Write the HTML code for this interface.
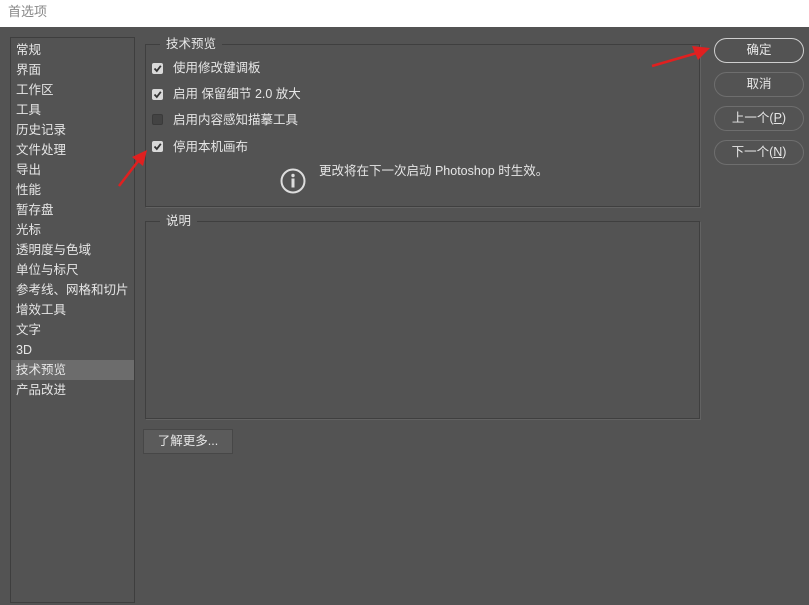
<!DOCTYPE html>
<html><head><meta charset="utf-8"><style>
body{margin:0;width:809px;height:605px;background:#535353;font-family:"Liberation Sans","Noto Sans CJK SC",sans-serif;font-size:12.5px;color:#e6e6e6;position:relative;overflow:hidden}
.t{position:absolute;left:0;top:0;width:809px;height:27px;background:#fff;color:#888;font-size:13px;line-height:24px;padding-left:8px;box-sizing:border-box}
.l{position:absolute;left:10px;top:37px;width:123px;height:564px;border:1px solid #3e3e3e;background:#535353}
.l div{height:20px;line-height:20px;padding-left:5px}
.l .s{background:#6c6c6c}
.g{position:absolute;border:1px solid #3f3f3f;box-shadow:1px 1px 0 #626262}
.gt{position:absolute;background:#535353;padding:0 6px;top:-9px;left:14px;line-height:16px}
.cb{position:absolute;left:152px;width:11px;height:11px;background:#d9d9d9;border-radius:2px}
.cb.e{background:#434343;border:1px solid #3a3a3a;width:9px;height:9px}
.cb svg{position:absolute;left:1px;top:1px}
.lb{position:absolute;left:173px;line-height:16px}
.b{position:absolute;left:714px;width:88px;height:23px;border:1px solid #6e6e6e;border-radius:13px;text-align:center;line-height:23px;color:#e6e6e6}
</style></head><body>
<div class="t">首选项</div>
<div class="l">
<div style="margin-top:2px">常规</div><div>界面</div><div>工作区</div><div>工具</div><div>历史记录</div><div>文件处理</div><div>导出</div><div>性能</div><div>暂存盘</div><div>光标</div><div>透明度与色域</div><div>单位与标尺</div><div>参考线、网格和切片</div><div>增效工具</div><div>文字</div><div>3D</div><div class="s">技术预览</div><div>产品改进</div>
</div>
<div class="g" style="left:145px;top:44px;width:553px;height:161px"><div class="gt">技术预览</div></div>
<div class="cb" style="top:63px"><svg width="9" height="9"><path d="M1.5 4.5L3.8 7L7.8 1.8" stroke="#333" stroke-width="1.8" fill="none"/></svg></div>
<div class="lb" style="top:60px">使用修改键调板</div>
<div class="cb" style="top:89px"><svg width="9" height="9"><path d="M1.5 4.5L3.8 7L7.8 1.8" stroke="#333" stroke-width="1.8" fill="none"/></svg></div>
<div class="lb" style="top:86px">启用 保留细节 2.0 放大</div>
<div class="cb e" style="top:114px"></div>
<div class="lb" style="top:112px">启用内容感知描摹工具</div>
<div class="cb" style="top:141px"><svg width="9" height="9"><path d="M1.5 4.5L3.8 7L7.8 1.8" stroke="#333" stroke-width="1.8" fill="none"/></svg></div>
<div class="lb" style="top:139px">停用本机画布</div>
<svg style="position:absolute;left:280px;top:168px" width="26" height="26"><circle cx="13" cy="13" r="11.5" stroke="#ddd" stroke-width="2" fill="none"/><circle cx="13" cy="7.5" r="1.7" fill="#ddd"/><rect x="11.5" y="10.5" width="3" height="9" fill="#ddd"/></svg>
<div class="lb" style="left:319px;top:163px">更改将在下一次启动 Photoshop 时生效。</div>
<div class="g" style="left:145px;top:221px;width:553px;height:196px"><div class="gt">说明</div></div>
<div style="position:absolute;left:143px;top:429px;width:88px;height:23px;background:#5b5b5b;border:1px solid #474747;line-height:23px;text-align:center">了解更多...</div>
<div class="b" style="top:38px;border-color:#cfcfcf;border-width:1.5px">确定</div>
<div class="b" style="top:72px">取消</div>
<div class="b" style="top:106px">上一个(<u>P</u>)</div>
<div class="b" style="top:140px">下一个(<u>N</u>)</div>
<svg style="position:absolute;left:0;top:0" width="809" height="605">
<line x1="652" y1="66" x2="697" y2="53" stroke="#e02020" stroke-width="2.5"/>
<polygon points="710,48 692,46 698,60" fill="#e02020"/>
<line x1="119" y1="186" x2="139" y2="160" stroke="#e02020" stroke-width="2.5"/>
<polygon points="147,150 132,157 143,166" fill="#e02020"/>
</svg>
</body></html>
